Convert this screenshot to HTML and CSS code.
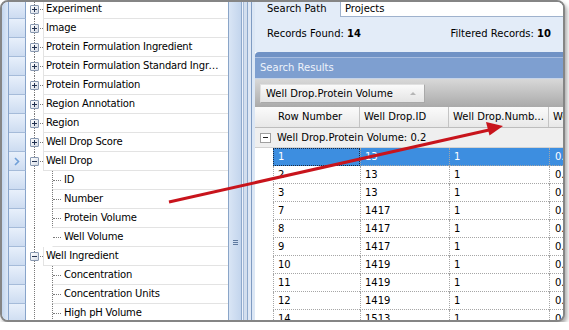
FILE: index.html
```html
<!DOCTYPE html>
<html>
<head>
<meta charset="utf-8">
<link rel="stylesheet" href="styles.css">
</head>
<body>
<div class="frame">
  <div class="left">
    <div class="strip"></div>
    <div class="tree">
      <div class="row"><span class="rh"></span><span class="g0 arm"><i class="box plus"></i></span><span class="cell c0">Experiment</span></div>
      <div class="row"><span class="rh"></span><span class="g0 arm"><i class="box plus"></i></span><span class="cell c0">Image</span></div>
      <div class="row"><span class="rh"></span><span class="g0 arm"><i class="box plus"></i></span><span class="cell c0">Protein Formulation Ingredient</span></div>
      <div class="row"><span class="rh"></span><span class="g0 arm"><i class="box plus"></i></span><span class="cell c0">Protein Formulation Standard Ingredient</span></div>
      <div class="row"><span class="rh"></span><span class="g0 arm"><i class="box plus"></i></span><span class="cell c0">Protein Formulation</span></div>
      <div class="row"><span class="rh"></span><span class="g0 arm"><i class="box plus"></i></span><span class="cell c0">Region Annotation</span></div>
      <div class="row"><span class="rh"></span><span class="g0 arm"><i class="box plus"></i></span><span class="cell c0">Region</span></div>
      <div class="row"><span class="rh"></span><span class="g0 arm"><i class="box plus"></i></span><span class="cell c0">Well Drop Score</span></div>
      <div class="row"><span class="rh"><svg class="chev" width="6" height="9" viewBox="0 0 6 9"><path d="M1 1l3.5 3.5L1 8" fill="none" stroke="#6f9fd8" stroke-width="1.6"/></svg></span><span class="g0 arm"><i class="box"></i></span><span class="cell c0">Well Drop</span></div>
      <div class="row"><span class="rh"></span><span class="g0"></span><span class="g1"></span><span class="cell c1">ID</span></div>
      <div class="row"><span class="rh"></span><span class="g0"></span><span class="g1"></span><span class="cell c1">Number</span></div>
      <div class="row"><span class="rh"></span><span class="g0"></span><span class="g1"></span><span class="cell c1">Protein Volume</span></div>
      <div class="row"><span class="rh"></span><span class="g0"></span><span class="g1"></span><span class="cell c1 last">Well Volume</span></div>
      <div class="row"><span class="rh"></span><span class="g0 arm"><i class="box"></i></span><span class="cell c0">Well Ingredient</span></div>
      <div class="row"><span class="rh"></span><span class="g0"></span><span class="g1"></span><span class="cell c1">Concentration</span></div>
      <div class="row"><span class="rh"></span><span class="g0"></span><span class="g1"></span><span class="cell c1">Concentration Units</span></div>
      <div class="row"><span class="rh"></span><span class="g0"></span><span class="g1"></span><span class="cell c1">High pH Volume</span></div>
    </div>
  </div>
  <div class="splitter"><span class="grip"></span></div>
  <div class="right">
    <div class="info">
      <div class="path-row"><span class="lbl">Search Path</span><div class="input">Projects</div></div>
      <div class="counts"><span>Records Found: <b>14</b></span><span>Filtered Records: <b>10</b></span></div>
    </div>
    <div class="results">
      <div class="results-head">Search Results</div>
      <div class="groupby"><div class="chip"><span>Well Drop.Protein Volume</span><span class="sort"></span></div></div>
      <div class="grid">
        <div class="ghead"><span class="h1">Row Number</span><span class="h2">Well Drop.ID</span><span class="h3">Well Drop.Numb...</span><span class="h4">Well Drop.Protein Volume</span></div>
        <div class="grow"><i class="gbox"></i><span>Well Drop.Protein Volume: 0.2</span></div>
        <div class="drow sel"><span class="ind"></span><span class="d d1 focus">1</span><span class="d d2">13</span><span class="d d3">1</span><span class="d d4">0.2</span></div>
        <div class="drow"><span class="ind"></span><span class="d d1">2</span><span class="d d2">13</span><span class="d d3">1</span><span class="d d4">0.2</span></div>
        <div class="drow"><span class="ind"></span><span class="d d1">3</span><span class="d d2">13</span><span class="d d3">1</span><span class="d d4">0.2</span></div>
        <div class="drow"><span class="ind"></span><span class="d d1">7</span><span class="d d2">1417</span><span class="d d3">1</span><span class="d d4">0.2</span></div>
        <div class="drow"><span class="ind"></span><span class="d d1">8</span><span class="d d2">1417</span><span class="d d3">1</span><span class="d d4">0.2</span></div>
        <div class="drow"><span class="ind"></span><span class="d d1">9</span><span class="d d2">1417</span><span class="d d3">1</span><span class="d d4">0.2</span></div>
        <div class="drow"><span class="ind"></span><span class="d d1">10</span><span class="d d2">1419</span><span class="d d3">1</span><span class="d d4">0.2</span></div>
        <div class="drow"><span class="ind"></span><span class="d d1">11</span><span class="d d2">1419</span><span class="d d3">1</span><span class="d d4">0.2</span></div>
        <div class="drow"><span class="ind"></span><span class="d d1">12</span><span class="d d2">1419</span><span class="d d3">1</span><span class="d d4">0.2</span></div>
        <div class="drow"><span class="ind"></span><span class="d d1">14</span><span class="d d2">1513</span><span class="d d3">1</span><span class="d d4">0.2</span></div>
      </div>
    </div>
  </div>
  <svg class="arrow" width="569" height="330" viewBox="0 0 569 330">
    <line x1="169" y1="202" x2="489" y2="130" stroke="#c8141c" stroke-width="3"/>
    <polygon points="503,126 489.5,135.5 486,122" fill="#c8141c"/>
  </svg>
</div>
</body>
</html>
```

FILE: styles.css
```css
* { box-sizing: border-box; }
body {
  margin: 0;
  background: #fff;
  font-family: "DejaVu Sans", sans-serif;
  font-size: 10px;
  color: #000;
}
.frame {
  position: relative;
  width: 565px;
  height: 322px;
  border: 2px solid #858585;
  border-radius: 8px;
  box-shadow: 2px 3px 4px rgba(0, 0, 0, 0.35);
  overflow: hidden;
  display: flex;
  background: #fff;
}

/* left tree */
.left { width: 226px; flex: none; display: flex; overflow: hidden; }
.strip {
  width: 7px; flex: none;
  border-right: 1px solid #88a4ca;
  background: linear-gradient(90deg, #c3d6ef, #dde8f7);
}
.tree { flex: 1; min-width: 0; margin-top: -2px; }
.row { display: flex; height: 19px; }
.rh {
  width: 17px; flex: none;
  border-right: 1px solid #88a4ca;
  border-bottom: 1px solid #a5bbd9;
  background: linear-gradient(#e8f0fb, #cddcf1);
  display: flex; align-items: center; justify-content: center;
}
.g0 {
  width: 17px; flex: none; position: relative;
  display: flex; align-items: center; padding-left: 4px;
}
.g0::before {
  content: ""; position: absolute; left: 8px; top: 0; bottom: 0;
  border-left: 1px dotted #7a7a7a;
}
.g0.arm::after {
  content: ""; position: absolute; left: 9px; right: 0; top: 9px;
  border-top: 1px dotted #7a7a7a;
}
.g1 { width: 9px; flex: none; }
.box {
  position: relative; z-index: 1;
  width: 9px; height: 9px; margin-top: -1px;
  border: 1px solid #8898b0; border-radius: 1px;
  background: linear-gradient(135deg, #ffffff, #d6dce6);
}
.box::before {
  content: ""; position: absolute; left: 1px; top: 3px; width: 5px; height: 1px;
  background: #22314f;
}
.box.plus::after {
  content: ""; position: absolute; left: 3px; top: 1px; width: 1px; height: 5px;
  background: #22314f;
}
.cell {
  flex: 1; min-width: 0; position: relative;
  border-bottom: 1px solid #e3e3e3;
  line-height: 18px; letter-spacing: -0.2px;
  white-space: nowrap; overflow: hidden; text-overflow: ellipsis;
}
.c0 { border-left: 1px solid #e3e3e3; padding-left: 2px; padding-right: 6px; }
.c1 { border-left: 1px dotted #7a7a7a; padding-left: 11px; }
.c1::before {
  content: ""; position: absolute; left: 0; width: 8px; top: 9px;
  border-top: 1px dotted #7a7a7a;
}
.c1.last { border-left-color: transparent; }
.c1.last::after {
  content: ""; position: absolute; left: -1px; top: 0; height: 10px;
  border-left: 1px dotted #7a7a7a;
}
.chev { display: block; margin-left: -1px; }

/* splitter */
.splitter {
  width: 27px; flex: none;
  background: linear-gradient(90deg,
    #8aa5c8 0 1px, #d9e5f5 1px, #c3d5ed 13px,
    #8ea9cc 13px 14px, #eef3fb 14px 15px, #a7bcd9 15px 16px,
    #d3dfef 16px 19px, #8ea9cc 19px 20px, #dfe8f5 20px 23px,
    #7f9bc2 23px 24px, #dce7f5 24px);
  padding: 238px 0 0 5px;
}
.grip {
  display: block; width: 5px; height: 5px;
  background: linear-gradient(#5f7aa0 0 1px, transparent 1px 2px, #5f7aa0 2px 3px, transparent 3px 4px, #5f7aa0 4px 5px);
}

/* right pane */
.right { width: 308px; flex: none; display: flex; flex-direction: column; }
.info { height: 50px; flex: none; background: #e3ecf8; padding-left: 12px; }
.path-row { display: flex; height: 15px; }
.lbl { width: 73px; line-height: 13px; }
.input {
  flex: 1; background: #fff;
  border-left: 1px solid #9fb2cd; border-bottom: 1px solid #9fb2cd;
  padding-left: 4px; line-height: 13px;
}
.counts {
  display: flex; justify-content: space-between;
  padding-right: 12px; margin-top: 9px; line-height: 16px;
}
.results { flex: 1; display: flex; flex-direction: column; min-height: 0; }
.results-head {
  height: 27px; flex: none;
  border-top: 5px solid #7092c5;
  border-bottom: 1px solid #c6d4e9;
  border-top-left-radius: 4px;
  background: linear-gradient(#a7bde0 0 1px, #7e9fd0 1px);
  color: #eef3fb; padding-left: 5px; line-height: 21px;
}
.groupby {
  height: 28px; flex: none;
  background: linear-gradient(#d8d8d8, #aaaaaa);
  padding: 5px 0 0 5px;
}
.chip {
  width: 165px; height: 19px;
  display: flex; align-items: center; justify-content: space-between;
  padding: 0 8px 0 5px;
  background: linear-gradient(#fafafa, #e4e4e4);
  border: 1px solid #a9a9a9; border-top-color: #e0e0e0; border-left-color: #e0e0e0;
}
.sort {
  width: 0; height: 0;
  border-left: 3px solid transparent; border-right: 3px solid transparent;
  border-bottom: 3px solid #b5b5b5;
}
.grid { flex: 1; overflow: hidden; background: #fff; }
.ghead {
  display: flex; height: 21px;
  background: linear-gradient(#fbfbfb, #e8e8e8);
  border-bottom: 1px solid #bdbdbd;
}
.ghead span {
  flex: none; border-right: 1px solid #c4c4c4;
  line-height: 20px; padding-left: 4px;
  white-space: nowrap; overflow: hidden;
}
.h1 { width: 105px; padding-left: 23px !important; }
.h2 { width: 89px; }
.h3 { width: 100px; }
.h4 { width: 60px; }
.grow {
  display: flex; align-items: center; height: 20px;
  background: #efefef; border-bottom: 1px solid #d2d2d2;
  padding-left: 5px;
}
.gbox {
  position: relative; width: 11px; height: 10px; margin-right: 6px;
  border: 1px solid #a0a0a0; background: #fff;
}
.gbox::before {
  content: ""; position: absolute; left: 2px; top: 3px; width: 5px; height: 1px; background: #222;
}
.drow { display: flex; height: 18px; }
.ind { width: 18px; flex: none; }
.d {
  flex: none; line-height: 17px; padding-left: 4px;
  border-left: 1px dotted #a6a6a6; border-bottom: 1px dotted #a6a6a6;
  white-space: nowrap; overflow: hidden;
}
.d1 { width: 87px; }
.d2 { width: 89px; }
.d3 { width: 100px; }
.d4 { width: 30px; padding-left: 5px; }
.sel .d { background: #3d8ee0; color: #fff; }
.sel .focus { outline: 1px dotted #1b2a40; outline-offset: -1px; }

.arrow { position: absolute; left: -2px; top: -2px; pointer-events: none; }
```
